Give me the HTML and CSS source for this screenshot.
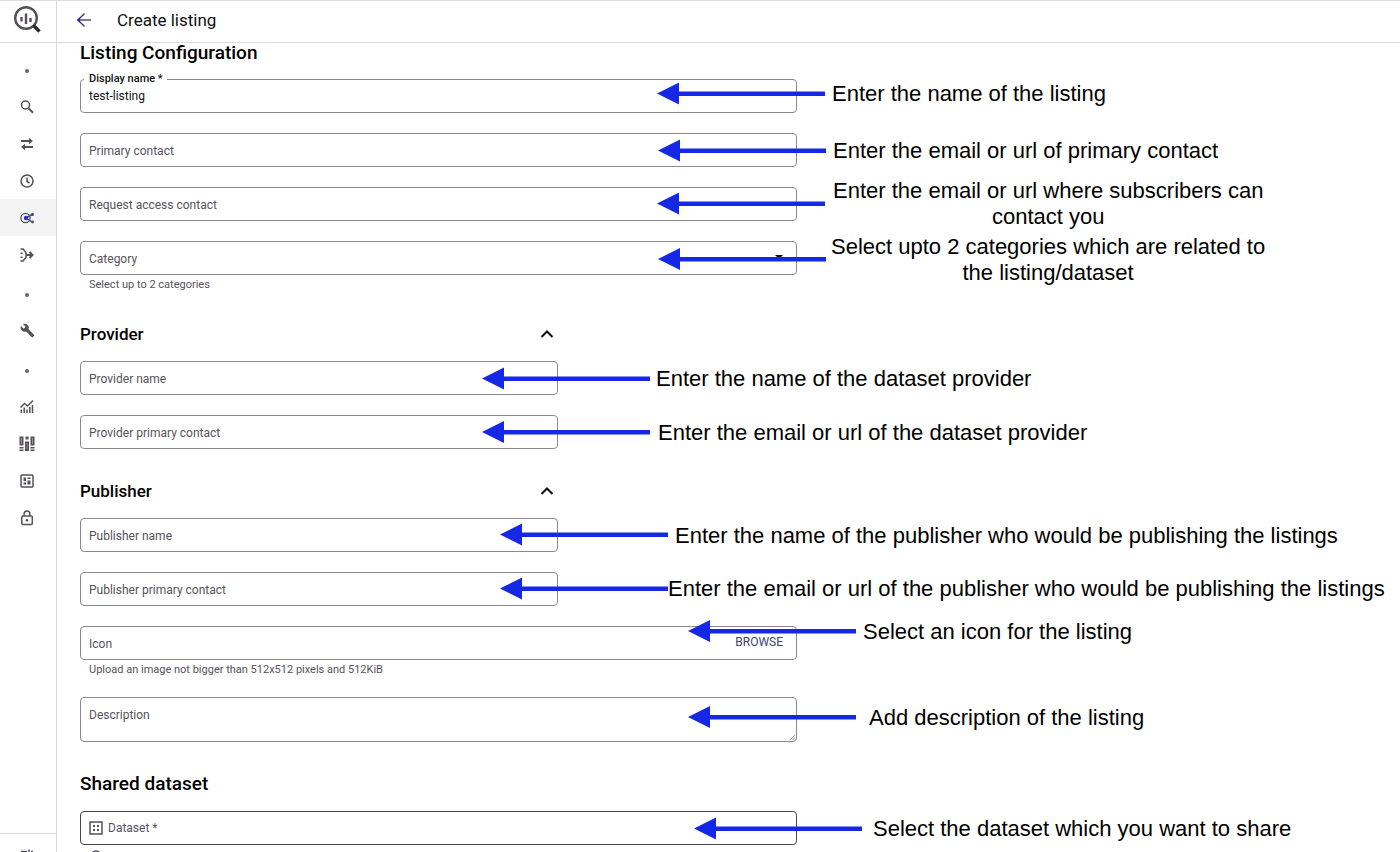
FILE: index.html
```html
<!DOCTYPE html>
<html lang="en">
<head>
<meta charset="utf-8">
<title>Create listing</title>
<link rel="stylesheet" href="styles.css">
</head>
<body>
<div class="app">
  <aside class="sidebar">
    <a class="logo" href="#" aria-label="BigQuery">
      <svg width="28" height="28" viewBox="0 0 28 28"><circle cx="13" cy="13" r="10.800" fill="none" stroke="#55505a" stroke-width="2.400"/><path d="M8.500 12v4.500M13 8.500v10.500M17.500 13v4" stroke="#55505a" stroke-width="2.400" fill="none"/><path d="M20.500 20.500l6 6" stroke="#2e2a30" stroke-width="3.600"/></svg>
    </a>
    <nav class="nav">
      <span class="dot-row"><i class="dot"></i></span>
      <a href="#" aria-label="Search"><svg width="16" height="16" viewBox="0 0 16 16"><circle cx="6.500" cy="6" r="4" class="s"/><path d="M9.500 9.200l4.500 4.500" class="s b"/></svg></a>
      <a href="#" aria-label="Transfers"><svg width="16" height="16" viewBox="0 0 16 16"><path d="M2 5h9M14 11H5" class="s b"/><path d="M10 1.800L14 5l-4 3.200zM6 7.800L2 11l4 3.200z" class="f"/></svg></a>
      <a href="#" aria-label="Scheduled queries"><svg width="16" height="16" viewBox="0 0 16 16"><circle cx="8" cy="8" r="6" class="s"/><path d="M8 4.500v4l2.500 1.500" class="s"/></svg></a>
      <a href="#" class="active" aria-label="Analytics Hub"><svg width="16" height="16" viewBox="0 0 16 16"><circle cx="6.500" cy="8" r="4.600" fill="none" stroke="#55505a" stroke-width="1.300"/><path d="M7 8L13 4.500M7 8l6 4" class="s"/><circle cx="7" cy="8" r="2.200" fill="#2b2fe0"/><circle cx="13.500" cy="4.500" r="1.400" fill="#2b2fd0"/><circle cx="13.500" cy="12" r="1.400" class="f"/></svg></a>
      <a href="#" aria-label="Dataform"><svg width="16" height="16" viewBox="0 0 16 16"><path d="M1.500 2H4l3 3.500v5L4 14H1.500" class="s"/><path d="M7 8h6M10.500 5L13.500 8l-3 3" class="s b"/><path d="M1.500 5.500h2v1.500h-2zM1.500 9.500h2V11h-2z" class="f"/></svg></a>
      <span class="dot-row"><i class="dot"></i></span>
      <a href="#" aria-label="Migration"><svg width="15" height="15" viewBox="0 0 24 24"><path class="f" d="M22.700 19l-9.100-9.100c.9-2.300.4-5-1.500-6.900-2-2-5-2.400-7.400-1.300L9 6 6 9 1.600 4.700C.4 7.100.9 10.100 2.900 12.100c1.900 1.900 4.600 2.400 6.900 1.500l9.100 9.100c.4.4 1 .4 1.400 0l2.300-2.300c.5-.4.5-1.100.1-1.400z"/></svg></a>
      <span class="dot-row"><i class="dot"></i></span>
      <a href="#" aria-label="Monitoring"><svg width="16" height="16" viewBox="0 0 16 16"><path d="M1.500 8.500l4-4 3 2.500L14 1.500" class="s"/><path d="M2.300 10.500V14M5.200 8.500V14M8 10.500V14M10.800 8V14M13.500 6V14" class="s"/></svg></a>
      <a href="#" aria-label="Capacity"><svg width="16" height="16" viewBox="0 0 16 16"><path class="f" d="M.5.500h4v9h-4zM6.500.500h3v3h-3zM11.500.500h4v9h-4zM.5 11h4v1.500h-4zM.5 13.500h4V15h-4zM6 5.500h4V15H6zM11.500 11h4v1.500h-4zM11.500 13.500h4V15h-4z"/><path d="M2.500 2v6M13.500 2v6M8 7v6" stroke="#99949c" stroke-width="1"/></svg></a>
      <a href="#" aria-label="BI Engine"><svg width="16" height="16" viewBox="0 0 16 16"><rect x="2" y="2" width="12" height="12" rx="1" class="s"/><path class="f" d="M4.500 4.500H7V8H4.500zM8.500 4.500h3V6h-3zM4.500 9.500H7v2H4.500zM8.500 7.500h3v4h-3z"/></svg></a>
      <a href="#" aria-label="Policy tags"><svg width="16" height="16" viewBox="0 0 16 16"><rect x="2.800" y="6" width="10.500" height="8.500" rx="1" class="s"/><path d="M5.100 6V4a2.900 2.900 0 0 1 5.800 0v2" class="s"/><circle cx="8" cy="10.200" r="1.300" class="f"/></svg></a>
    </nav>
    <div class="side-foot">
      <svg width="16" height="16" viewBox="0 0 16 16"><path d="M2 2.500h6M10 .5v4M12 2.500h2M2 7h12" class="s"/></svg>
    </div>
  </aside>

  <div class="page">
    <header class="topbar">
      <a class="back" href="#" aria-label="Back"><svg width="16" height="16" viewBox="0 0 16 16"><path d="M15 8H2" stroke="#55506a" stroke-width="1.500"/><path d="M8.500 1.500L2 8l6.500 6.500" fill="none" stroke="#4e4a80" stroke-width="1.500"/><path d="M1 8l3-2.500v5z" fill="#1c22e8"/></svg></a>
      <h1>Create listing</h1>
    </header>

    <form class="form">
      <section>
        <div class="section-head first"><h2 class="large">Listing Configuration</h2></div>
        <div class="fields">
          <div class="field floated"><label for="name">Display name *</label><input id="name" type="text" value="test-listing"></div>
          <div class="field"><label for="contact">Primary contact</label><input id="contact" type="text"></div>
          <div class="field"><label for="request">Request access contact</label><input id="request" type="text"></div>
          <div>
            <div class="field"><label for="category">Category</label><select id="category"><option></option></select>
              <svg class="caret" width="8" height="4" viewBox="0 0 8 4"><path d="M0 0h8L4 4z"/></svg></div>
            <p class="hint">Select up to 2 categories</p>
          </div>
        </div>
      </section>

      <section>
        <div class="section-head narrow"><h2>Provider</h2><button type="button" aria-label="Collapse provider"><svg width="14" height="10" viewBox="0 0 14 10"><path d="M1.500 8L7 2.500 12.500 8"/></svg></button></div>
        <div class="fields narrow">
          <div class="field"><label for="prov">Provider name</label><input id="prov" type="text"></div>
          <div class="field"><label for="provc">Provider primary contact</label><input id="provc" type="text"></div>
        </div>
      </section>

      <section>
        <div class="section-head narrow"><h2>Publisher</h2><button type="button" aria-label="Collapse publisher"><svg width="14" height="10" viewBox="0 0 14 10"><path d="M1.500 8L7 2.500 12.500 8"/></svg></button></div>
        <div class="fields">
          <div class="field narrow"><label for="pub">Publisher name</label><input id="pub" type="text"></div>
          <div class="field narrow"><label for="pubc">Publisher primary contact</label><input id="pubc" type="text"></div>
          <div>
            <div class="field"><label for="icon">Icon</label><input id="icon" type="text"><button class="browse" type="button">BROWSE</button></div>
            <p class="hint">Upload an image not bigger than 512x512 pixels and 512KiB</p>
          </div>
          <div class="field"><label for="desc">Description</label><textarea id="desc"></textarea>
            <svg class="grip" width="5" height="5" viewBox="0 0 6 6"><path d="M0 6L6 0M3 6l3-3"/></svg></div>
        </div>
      </section>

      <section>
        <div class="section-head"><h2 class="large">Shared dataset</h2></div>
        <div class="fields">
          <div>
            <div class="field strong"><label for="dataset"><svg width="14" height="14" viewBox="0 0 14 14"><rect x="1" y="1" width="12" height="12" fill="none" stroke="#55505a" stroke-width="1.500"/><path d="M4 4h2v2H4zM8 4h2v2H8zM4 8h2v2H4zM8 8h2v2H8z" fill="#55505a"/></svg>Dataset *</label><input id="dataset" type="text"></div>
            <p class="hint info"><svg width="12" height="12" viewBox="0 0 12 12"><circle cx="6" cy="6" r="5" class="s"/></svg></p>
          </div>
        </div>
      </section>
    </form>
  </div>

  <div class="notes">
    <svg class="arrows" width="900" height="852" viewBox="0 0 900 852">
      <defs><path id="arrow" d="M0 0L22-11V-2H168V2.500H22V11z"/></defs>
      <use href="#arrow" x="657" y="93.500"/><use href="#arrow" x="658" y="150.500"/>
      <use href="#arrow" x="657" y="203.500"/><use href="#arrow" x="658" y="259"/>
      <use href="#arrow" x="482" y="378.500"/><use href="#arrow" x="482" y="432"/>
      <use href="#arrow" x="500" y="534.500"/><use href="#arrow" x="500" y="588.500"/>
      <use href="#arrow" x="688" y="631"/><use href="#arrow" x="688" y="717"/>
      <use href="#arrow" x="694" y="828.500"/>
    </svg>
    <p class="note n1">Enter the name of the listing</p>
    <p class="note n2">Enter the email or url of primary contact</p>
    <p class="note n3">Enter the email or url where subscribers can<br>contact you</p>
    <p class="note n4">Select upto 2 categories which are related to<br>the listing/dataset</p>
    <p class="note n5">Enter the name of the dataset provider</p>
    <p class="note n6">Enter the email or url of the dataset provider</p>
    <p class="note n7">Enter the name of the publisher who would be publishing the listings</p>
    <p class="note n8">Enter the email or url of the publisher who would be publishing the listings</p>
    <p class="note n9">Select an icon for the listing</p>
    <p class="note n10">Add description of the listing</p>
    <p class="note n11">Select the dataset which you want to share</p>
  </div>
</div>
</body>
</html>
```
FILE: styles.css
```css
* { box-sizing: border-box; }
body, h1, h2, p { margin: 0; }
body { font-family: Roboto, "Liberation Sans", sans-serif; font-size: 12px; color: #111; background: #fff; }
svg { display: block; }
.s { fill: none; stroke: #55505a; stroke-width: 1.5; }
.s.b { stroke-width: 2; }
.f { fill: #55505a; }

.app { position: relative; display: flex; height: 100vh; overflow: hidden; border-top: 1px solid #dcdcdc; }

.sidebar { flex: none; width: 57px; display: flex; flex-direction: column; border-right: 1px solid #dadada; }
.logo { display: flex; align-items: center; justify-content: center; height: 42px; border-bottom: 1px solid #dadada; padding: 0 2px 5px 0; }
.nav { display: flex; flex-direction: column; padding-top: 6px; }
.nav a, .dot-row { display: flex; align-items: center; justify-content: center; height: 37px; padding-right: 2px; }
.nav a.active { background: #f4f4f4; }
.dot-row { height: 39px; padding-top: 4px; }
.dot { width: 4px; height: 4px; border-radius: 50%; background: #6a656d; }
.side-foot { margin-top: auto; height: 19px; overflow: hidden; border-top: 1px solid #dadada; display: flex; justify-content: center; padding: 15px 2px 0 0; }

.page { flex: 1; min-width: 0; }
.topbar { display: flex; align-items: center; gap: 25px; height: 42px; padding: 0 19px 4px; border-bottom: 1px solid #dadada; }
h1 { font-size: 17px; line-height: 20px; font-weight: 400; }

.form { max-width: 741px; padding: 0 1px 0 23px; display: flex; flex-direction: column; gap: 32px; }
h2 { font-size: 17px; line-height: 20px; font-weight: 500; color: #000; }
h2.large { font-size: 19px; }
.section-head { display: flex; justify-content: space-between; align-items: center; margin-bottom: 17px; }
.section-head.first { margin-bottom: 16px; }
.section-head button { border: 0; background: none; padding: 0 4px; }
.section-head path { fill: none; stroke: #111; stroke-width: 2; }
.narrow { width: 478px; }
.fields { display: flex; flex-direction: column; gap: 20px; }

.field { position: relative; }
.field input, .field select, .field textarea { display: block; width: 100%; height: 34px; border: 1px solid #8b8890; border-radius: 4px; background: #fff; padding: 0 8px; font: inherit; color: #111; appearance: none; outline: 0; }
.field textarea { height: 45px; resize: none; }
.field label { position: absolute; left: 9px; top: 10px; display: flex; align-items: center; gap: 5px; line-height: 16px; color: #57525b; }
.field.floated label { left: 4px; top: -8px; padding: 0 4px 0 5px; font-size: 11px; font-weight: 500; color: #111; background: #fff; }
.field.strong label { top: 9px; }
.field.strong input { border-color: #4b474e; }
.caret { position: absolute; right: 14px; top: 14px; fill: #111; }
.grip { position: absolute; right: 2px; bottom: 2px; fill: none; stroke: #99949c; }
.browse { position: absolute; right: 14px; top: 8px; border: 0; padding: 0; background: none; font: inherit; line-height: 16px; color: #453f7c; }
.hint { padding: 2px 9px 0; font-size: 11px; line-height: 15px; color: #57525b; }
.hint.info { padding: 5px 10px 0; }

.notes { position: absolute; inset: -1px 0 0; pointer-events: none; }
.arrows { fill: #1428e6; }
.note { position: absolute; font-family: "Liberation Sans", Arial, sans-serif; font-size: 22px; line-height: 26px; color: #000; text-align: center; white-space: nowrap; }
.n1 { left: 832px; top: 81px; }
.n2 { left: 833px; top: 138px; }
.n3 { left: 833px; top: 178px; }
.n4 { left: 831px; top: 234px; }
.n5 { left: 656px; top: 366px; }
.n6 { left: 658px; top: 420px; }
.n7 { left: 675px; top: 523px; }
.n8 { left: 668px; top: 576px; }
.n9 { left: 863px; top: 619px; }
.n10 { left: 869px; top: 705px; }
.n11 { left: 873px; top: 816px; }
```
